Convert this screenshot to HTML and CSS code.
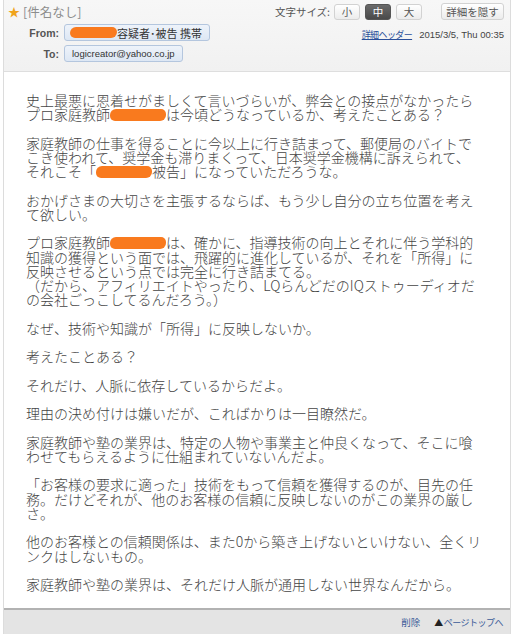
FILE: index.html
```html
<!DOCTYPE html>
<html lang="ja">
<head>
<meta charset="utf-8">
<title>メール</title>
<link rel="stylesheet" href="styles.css">
</head>
<body>
<div class="page">
  <div class="header">
    <div class="row row-top">
      <div class="subject"><span class="star">★</span><span class="subject-text">[件名なし]</span></div>
      <div class="tools">
        <span class="size-label">文字サイズ:</span>
        <span class="btn size">小</span>
        <span class="btn size active">中</span>
        <span class="btn size">大</span>
        <span class="btn hide">詳細を隠す</span>
      </div>
    </div>
    <div class="row row-from">
      <div class="field">
        <span class="label">From:</span>
        <span class="pill"><span class="blob small"></span>容疑者･被告 携帯</span>
      </div>
      <div class="meta">
        <a class="detail-link" href="#">詳細ヘッダー</a>
        <span class="date">2015/3/5, Thu 00:35</span>
      </div>
    </div>
    <div class="row row-to">
      <div class="field">
        <span class="label">To:</span>
        <span class="pill mail">logicreator@yahoo.co.jp</span>
      </div>
    </div>
  </div>

  <div class="body">
    <p>史上最悪に恩着せがましくて言いづらいが、弊会との接点がなかったら<br>プロ家庭教師<span class="blob"></span>は今頃どうなっているか、考えたことある？</p>
    <p>家庭教師の仕事を得ることに今以上に行き詰まって、郵便局のバイトで<br>こき使われて、奨学金も滞りまくって、日本奨学金機構に訴えられて、<br>それこそ「<span class="blob"></span>被告」になっていただろうな。</p>
    <p>おかげさまの大切さを主張するならば、もう少し自分の立ち位置を考え<br>て欲しい。</p>
    <p>プロ家庭教師<span class="blob"></span>は、確かに、指導技術の向上とそれに伴う学科的<br>知識の獲得という面では、飛躍的に進化しているが、それを「所得」に<br>反映させるという点では完全に行き詰まてる。<br>（だから、アフィリエイトやったり、LQらんどだのIQストゥーディオだ<br>の会社ごっこしてるんだろう。）</p>
    <p>なぜ、技術や知識が「所得」に反映しないか。</p>
    <p>考えたことある？</p>
    <p>それだけ、人脈に依存しているからだよ。</p>
    <p>理由の決め付けは嫌いだが、こればかりは一目瞭然だ。</p>
    <p>家庭教師や塾の業界は、特定の人物や事業主と仲良くなって、そこに喰<br>わせてもらえるように仕組まれていないんだよ。</p>
    <p>「お客様の要求に適った」技術をもって信頼を獲得するのが、目先の任<br>務。だけどそれが、他のお客様の信頼に反映しないのがこの業界の厳し<br>さ。</p>
    <p>他のお客様との信頼関係は、また0から築き上げないといけない、全くリ<br>ンクはしないもの。</p>
    <p>家庭教師や塾の業界は、それだけ人脈が通用しない世界なんだから。</p>
  </div>

  <div class="footer">
    <a class="flink" href="#">削除</a>
    <a class="flink top" href="#"><span class="tri">▲</span>ページトップへ</a>
  </div>
</div>
</body>
</html>
```

FILE: styles.css
```css
html, body {
  margin: 0;
  padding: 0;
  background: #ffffff;
}

body {
  font-family: "Noto Sans CJK JP", "Liberation Sans", sans-serif;
  color: #333;
}

.page {
  margin: 0 3px 0 3px;
  border-left: 1px solid #dcdcdc;
  border-right: 1px solid #dcdcdc;
  height: 634px;
  display: flex;
  flex-direction: column;
}

/* ---------- header ---------- */
.header {
  height: 72px;
  box-sizing: border-box;
  background: linear-gradient(#f7f7f7, #f1f1f1);
  border-bottom: 1px solid #dedede;
  padding: 3px 6px 0 4px;
  display: flex;
  flex-direction: column;
}

.row {
  display: flex;
  justify-content: space-between;
  align-items: center;
}

.row-top {
  height: 17px;
}

.row-from {
  margin-top: 4px;
  height: 17px;
}

.row-to {
  margin-top: 4px;
  height: 17px;
}

.subject {
  display: flex;
  align-items: center;
  font-size: 12.5px;
  line-height: 17px;
}

.star {
  color: #f0a41c;
  font-size: 12px;
  margin-right: 3px;
}

.subject-text {
  color: #8d8d8d;
}

.tools {
  display: flex;
  align-items: center;
}

.size-label {
  font-size: 10.5px;
  color: #555;
  margin-right: 4px;
}

.btn {
  display: inline-flex;
  align-items: center;
  justify-content: center;
  height: 16px;
  box-sizing: border-box;
  border: 1px solid #d2d2d2;
  border-radius: 3px;
  background: linear-gradient(#ffffff, #ececec);
  font-size: 10.5px;
  color: #555;
}

.btn.size {
  width: 26px;
  margin-right: 5px;
}

.btn.size.active {
  background: linear-gradient(#6a6a6a, #4a4a4a);
  border-color: #555;
  color: #fff;
}

.btn.hide {
  width: 63px;
  margin-left: 14px;
  height: 17px;
}

.field {
  display: flex;
  align-items: center;
}

.label {
  width: 51px;
  text-align: right;
  font-family: "Liberation Sans", sans-serif;
  font-weight: bold;
  font-size: 10.5px;
  color: #555;
  margin-right: 5px;
}

.pill {
  display: inline-flex;
  align-items: center;
  height: 17px;
  box-sizing: border-box;
  padding: 0 7px 0 5px;
  border: 1px solid #b4c6de;
  border-radius: 3px;
  background: linear-gradient(#eef3fa, #dde7f4);
  font-size: 11px;
  color: #333;
}

.pill.mail {
  font-family: "Liberation Sans", sans-serif;
  font-size: 9.5px;
  padding: 0 7px 0 7px;
}

.meta {
  display: flex;
  align-items: center;
  margin-top: 4px;
}

.detail-link {
  font-size: 9px;
  letter-spacing: -0.6px;
  color: #2a4f9a;
  text-decoration: underline;
  margin-right: 7px;
}

.date {
  font-family: "Liberation Sans", sans-serif;
  font-size: 9.5px;
  color: #444;
}

/* ---------- body ---------- */
.body {
  flex: 1;
  padding: 21px 10px 0 22px;
  font-size: 14px;
  font-weight: 300;
  line-height: 14.24px;
  color: #444;
  white-space: nowrap;
}

.body p {
  margin: 0 0 14.24px 0;
}

.blob {
  display: inline-block;
  width: 56px;
  height: 12px;
  vertical-align: -1px;
  background: #f97a1e;
  border-radius: 6px 5px 6px 5px;
}

.blob.small {
  width: 47px;
  height: 11px;
  margin-right: 0;
}

/* ---------- footer ---------- */
.footer {
  height: 26px;
  box-sizing: border-box;
  border-top: 2px solid #b2b2b2;
  background: #e4e4e4;
  display: flex;
  justify-content: flex-end;
  align-items: center;
  padding: 0 7px 0 0;
}

.flink {
  font-size: 9.5px;
  color: #3b5b98;
  text-decoration: none;
}

.flink.top {
  margin-left: 14px;
  font-size: 9px;
  letter-spacing: -0.5px;
}

.tri {
  color: #222;
  font-size: 9px;
  margin-right: 1px;
}
```
